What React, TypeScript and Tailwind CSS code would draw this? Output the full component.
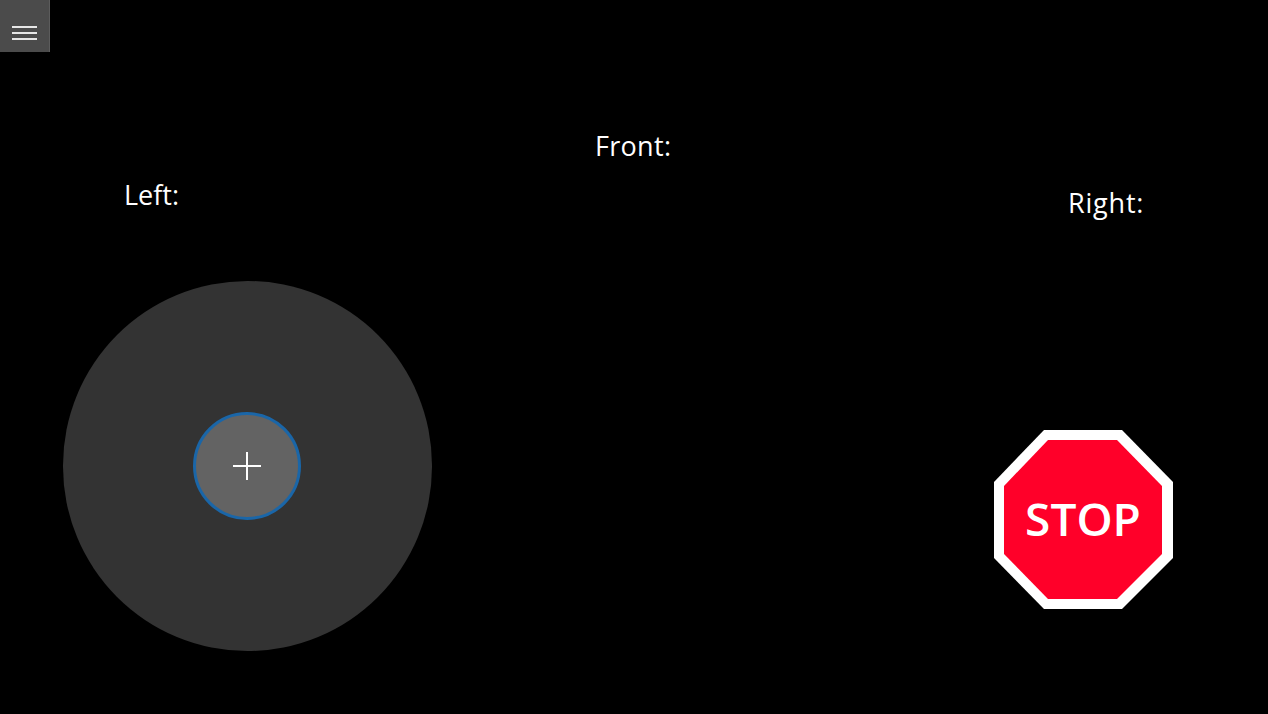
export default function App() {
  return (
    <div className="h-[714px] w-full overflow-hidden bg-black text-white font-['Open_Sans',sans-serif]">
      {/* Hamburger */}
      <button className="flex h-[52px] w-[50px] flex-col items-start gap-[4px] border-r border-[#5c5c5c] bg-[#4b4b4b] pl-[12px] pt-[26px]">
        <span className="h-[2px] w-[25px] bg-[#e6e6e6]" />
        <span className="h-[2px] w-[25px] bg-[#e6e6e6]" />
        <span className="h-[2px] w-[25px] bg-[#e6e6e6]" />
      </button>

      <div className="flex">
        {/* Left stick */}
        <div className="ml-[63px] w-[370px]">
          <div className="ml-[61px] mt-[124px] text-[27px] leading-[38px]">Left:</div>
          <div className="mt-[67px] flex h-[370px] w-[369px] items-center justify-center rounded-full bg-[#333333] pr-px">
            <div className="flex h-[108px] w-[108px] items-center justify-center rounded-full border-[3px] border-[#1a66a8] bg-[#636363]">
              <svg width="30" height="30" viewBox="0 0 30 30">
                <path d="M1 15H29M15 1V29" stroke="#fff" strokeWidth="2" />
              </svg>
            </div>
          </div>
        </div>

        {/* Front */}
        <div className="ml-[163px] w-[472px]">
          <div className="ml-[-1px] mt-[75px] text-[27px] leading-[38px] tracking-[0.3px]">Front:</div>
        </div>

        {/* Right + stop */}
        <div className="flex-1">
          <div className="mt-[132px] text-[27px] leading-[38px] tracking-[0.8px]">Right:</div>
          <svg className="ml-[-74px] mt-[208px] block" width="179" height="179" viewBox="0 0 179 179">
            <polygon points="50,0 128,0 179,52 179,128 128,179 50,179 0,128 0,52" fill="#fff" />
            <polygon points="54,10 123,10 168,56 168,124 123,169 54,169 10,124 10,56" fill="#ff0029" />
            <text x="89" y="106" textAnchor="middle" fontSize="46" fontWeight="600" fill="#fff">STOP</text>
          </svg>
        </div>
      </div>
    </div>
  );
}
